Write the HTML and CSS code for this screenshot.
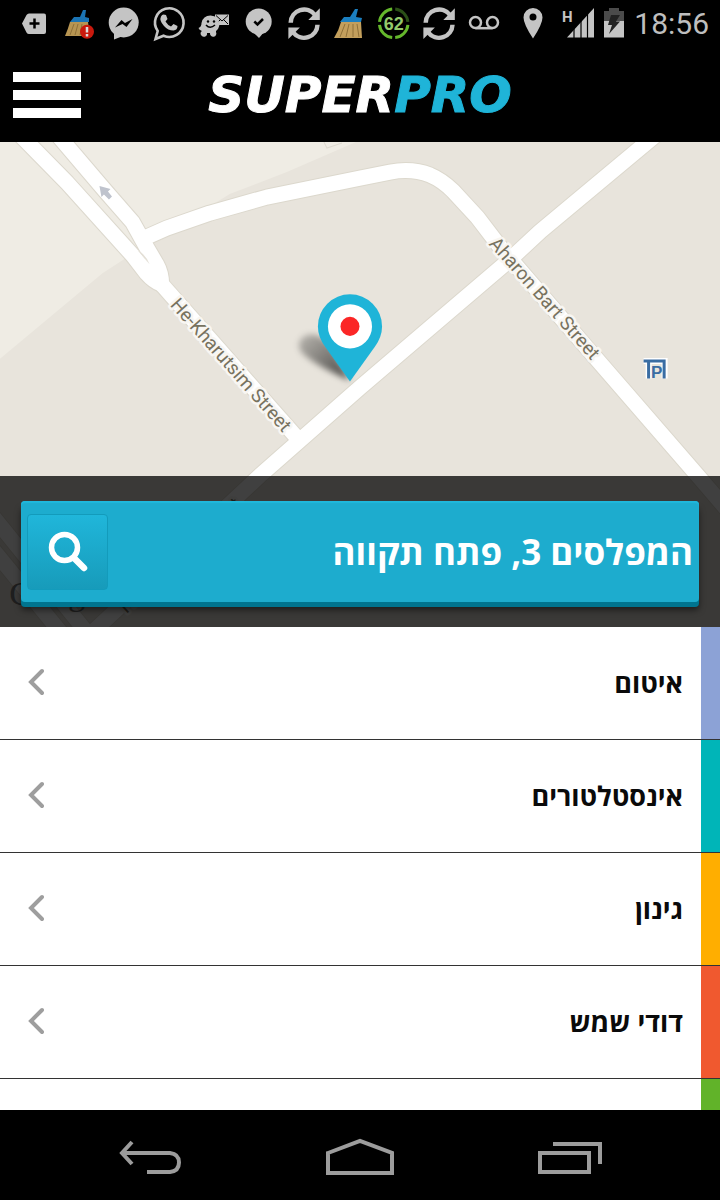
FILE: index.html
```html
<!DOCTYPE html>
<html lang="he" dir="rtl">
<head>
	<meta charset="UTF-8">
	<meta name="viewport" content="width=device-width, initial-scale=1">
	<title>SuperPro</title>
	<link rel="stylesheet" href="styles.css">
</head>
<body>
	<div class="status" dir="ltr">
		<svg class="note" viewBox="0 0 45 48"><path d="M11 23.5L15.500 15Q16.500 13.500 18 13.500H33Q35 13.500 35 15.500V32Q35 34 33 34H18Q16.500 34 15.500 32.500Z"/><path class="cut" d="M18.500 23.500H28.500M23.500 18.500V28.500"/></svg>
		<svg class="note" viewBox="0 0 45 48"><path fill="#b79552" d="M14 22H32L34 36H9Q12 29 14 22Z"/><path class="hair" d="M18 24L14 35M22 24L19 35M26 24L24 35"/><path fill="#1b74b4" d="M14 22L18 17H24L27 10H30L29 17L33 18V22Z"/><circle cx="31" cy="31.700" r="7" fill="#c9190d"/><path stroke="#ddd" stroke-width="2.500" d="M31 27V32.500M31 34V36.500"/></svg>
		<svg class="note" viewBox="0 0 45 48"><circle cx="22.700" cy="22.500" r="15"/><path d="M13 31V39.500L22 36Z"/><path fill="#000" d="M14 27.500L20.500 20L24 23L31.500 19L25.500 27L21.500 24Z"/></svg>
		<svg class="note" viewBox="0 0 45 48"><path fill="none" stroke="#c4c4c4" stroke-width="2.600" d="M9.500 39L11.700 31A14.300 14.300 0 1 1 17.500 35.700Z"/><path d="M17.500 14.500L20 15L21.500 19L19.500 21.500Q21.500 25 25 26.500L27.500 24L31.500 26Q31.500 30 27.500 30.500Q22 30.500 18 26Q13 20.500 15 16.500Q16 14.500 17.500 14.500Z"/></svg>
		<svg class="note" viewBox="0 0 45 48"><path d="M24 14.500H38V25H24Z"/><path fill="none" stroke="#000" d="M25 15.500L31 21L37 15.500M25 24L29.500 19.500M37 24L32.500 19.500"/><path d="M7.500 28Q10.500 27 10.500 23Q12 15.500 19.500 15.500Q28 16 28.500 24Q28 29 25 31V32A3.200 3.200 0 1 1 19 33H16A3.200 3.200 0 1 1 11 31Q8 30 7.500 28Z"/><circle cx="17" cy="21.500" r="1.200" fill="#000"/><circle cx="23" cy="21.500" r="1.200" fill="#000"/><path fill="none" stroke="#000" stroke-width="1.500" d="M15 25Q19 29.500 24 25"/></svg>
		<svg class="note" viewBox="0 0 45 48"><circle cx="22.700" cy="21.500" r="13"/><path d="M17 32L23 38L28 32Z"/><path class="cut" d="M18.300 21.500L21.500 24.500L27 19"/></svg>
		<svg class="note" viewBox="0 0 45 48"><g id="half"><path fill="none" stroke="#c4c4c4" stroke-width="4.500" d="M9.700 22.700A13.500 13.500 0 0 1 34 15"/><path d="M38.800 8.300V20H27.300Z"/></g><use href="#half" transform="rotate(180 23.100 23.700)"/></svg>
		<svg class="note" viewBox="0 0 45 48"><path fill="#c39f5c" d="M15 22H35L36 38H8Q13 30 15 22Z"/><path class="hair" d="M19 24L14 37M23 24L20 37M27 24V37M31 24L33 37"/><path fill="#1b7fc0" d="M14 22L18 17H24L29 9H32L30 17L36 18L35 22Z"/></svg>
		<svg class="note" viewBox="0 0 45 48"><g fill="none" stroke="#65b72c" stroke-width="3"><path d="M21.200 37.600A14.300 14.300 0 0 1 8.500 24.800M8.500 21.800A14.300 14.300 0 0 1 21.200 9.100M36.900 24.800A14.300 14.300 0 0 1 24.200 37.600"/><path stroke="#2b5017" d="M24.200 9.100A14.300 14.300 0 0 1 36.900 21.800"/></g><text class="percent" x="22.700" y="29.500">62</text></svg>
		<svg class="note" viewBox="0 0 45 48"><use href="#half"/><use href="#half" transform="rotate(180 23.100 23.700)"/></svg>
		<svg class="note" viewBox="0 0 45 48"><g fill="none" stroke="#c4c4c4" stroke-width="2.500"><circle cx="14.500" cy="22.500" r="5.500"/><circle cx="31.500" cy="22.500" r="5.500"/><path d="M14.500 28.200H31.500"/></g></svg>
		<div class="system">
			<svg width="20" height="48" viewBox="0 0 20 48"><path fill-rule="evenodd" d="M10 38.500Q.5 24 .5 17.500A9.500 9.500 0 0 1 19.500 17.500Q19.500 24 10 38.500ZM10 13.500A3.500 3.500 0 1 0 10 20.500A3.500 3.500 0 1 0 10 13.500Z"/></svg>
			<svg class="signal" width="32" height="48" viewBox="0 0 32 48"><text x="0" y="22">H</text><path d="M5 37.500L32 8V37.500Z"/><path stroke="#000" stroke-width="1.200" d="M12 8V38M19 8V38M25.500 8V38"/></svg>
			<svg width="20" height="48" viewBox="0 0 20 48"><path fill="#4b4b4b" d="M0 21V11H5V8H15V11H20V21Z"/><path d="M0 21H20V37.500H0Z"/><path fill="#222" d="M7 15H16L12 21.500H16L5 34L8 25H4Z"/></svg>
			<time>18:56</time>
		</div>
	</div>

	<header class="top" dir="ltr">
		<button class="menu" type="button" aria-label="תפריט"><span></span><span></span><span></span></button>
		<h1 class="logo">SUPER<span>PRO</span></h1>
	</header>

	<section class="map">
		<svg class="mapPic" viewBox="0 0 720 484" preserveAspectRatio="xMidYMin slice" direction="ltr">
			<defs>
				<filter id="blur" x="-30%" y="-30%" width="160%" height="160%"><feGaussianBlur stdDeviation="3"/></filter>
				<linearGradient id="shade" x1="0" y1="0" x2="1" y2="1"><stop offset="0" stop-color="#000" stop-opacity=".2"/><stop offset="1" stop-color="#000" stop-opacity=".7"/></linearGradient>
				<!-- roads are drawn twice: wide edge first, white on top -->
				<g id="roads">
					<path d="M18 -10L68 41L133 113L147 131Q154 139 162 142"/>
					<path d="M54 -12L106 49L133 80L147 105L157 122Q162 131 162 142"/>
					<path d="M155 134L297 295"/>
					<path d="M140 98L167 86L210 71L267 55L360 36L390 30Q412 26 430 33Q442 38 453 49L477 75L500 105L593 213L697 333L740 383"/>
					<path d="M660 -11L540 89L510 117L360 245L260 333L90 492"/>
					<path d="M-10 369L100 505M-10 402L70 500"/>
				</g>
			</defs>
			<path fill="#e8e4dc" d="M0 0H720V484H0Z"/>
			<path fill="#efece4" d="M0 0H356L287 30L230 52L123 118L103 131L0 217Z"/>
			<path fill="none" stroke="#dedad0" d="M324 0L327 6L342 1"/>
			<use href="#roads" class="edge"/>
			<use href="#roads" class="road"/>
			<path fill="#e3dfd6" d="M138 108Q146 112 150 122Z"/>
			<path fill="#bfc3cd" d="M100 44L111 47L108.500 49.500L112.500 54.500L109.500 57.500L104.500 52.500L102 55Z"/>
			<g class="street">
				<text transform="translate(170 163) rotate(48.500)">He-Kharutsim Street</text>
				<text transform="translate(488 102) rotate(48.500)">Aharon Bart Street</text>
				<text transform="translate(127 471) rotate(-43)">HaMefalsim Street</text>
			</g>
			<text class="mark" x="10" y="462">Google</text>
			<g class="train"><path stroke="#fff" stroke-width="6" d="M643 218.500H664V236M648 218V236"/><path d="M643 218.500H665M663.500 218V236M648 218V236"/><text x="650.500" y="236">P</text></g>
			<path fill="url(#shade)" filter="url(#blur)" d="M350 238Q313 222 301 209Q296 199 304 194Q318 187 332 205Z"/>
			<path fill="#1fb4d8" d="M350 239L325 204Q318 194 318 184A32 32 0 0 1 382 184Q382 194 375 204Z"/>
			<circle cx="350" cy="184" r="22" fill="#fff"/>
			<circle cx="350" cy="184" r="9.500" fill="#fb2626"/>
		</svg>
		<div class="panel">
			<form class="search">
				<input type="text" aria-label="כתובת" value="המפלסים 3, פתח תקווה">
				<button type="button" aria-label="חיפוש">
					<svg width="40" height="42" viewBox="0 0 40 42"><circle cx="16.500" cy="16.500" r="13" fill="none" stroke="#fff" stroke-width="5.500"/><path stroke="#fff" stroke-width="6.500" stroke-linecap="round" d="M26 27L36 37"/></svg>
				</button>
			</form>
		</div>
	</section>

	<ul class="list">
		<li class="blue"><a href="#">איטום<svg width="16" height="28" viewBox="0 0 16 28"><path d="M14 3L3 14L14 25"/></svg></a></li>
		<li class="teal"><a href="#">אינסטלטורים<svg width="16" height="28" viewBox="0 0 16 28"><path d="M14 3L3 14L14 25"/></svg></a></li>
		<li class="yellow"><a href="#">גינון<svg width="16" height="28" viewBox="0 0 16 28"><path d="M14 3L3 14L14 25"/></svg></a></li>
		<li class="red"><a href="#">דודי שמש<svg width="16" height="28" viewBox="0 0 16 28"><path d="M14 3L3 14L14 25"/></svg></a></li>
		<li class="green"><a href="#" aria-label="עוד"></a></li>
	</ul>

	<nav class="keys" dir="ltr">
		<button type="button" aria-label="חזרה"><svg width="64" height="36" viewBox="0 0 64 36"><path d="M3 14H52Q61 15 61 23.500Q61 32 52 33H29M14 3L4 14L14 25"/></svg></button>
		<button type="button" aria-label="בית"><svg width="68" height="38" viewBox="0 0 68 38"><path d="M2 15L34 3L66 15V35H2Z"/></svg></button>
		<button type="button" aria-label="אחרונים"><svg width="64" height="36" viewBox="0 0 64 36"><path d="M2 14H51V33H2ZM15 5H62V25"/></svg></button>
	</nav>
</body>
</html>
```
FILE: styles.css
```css
*{margin: 0;padding: 0;box-sizing: border-box;}
body{
	display: flex;
	flex-direction: column;
	height: 100vh;
	overflow: hidden;
	background: #fff;
	font-family: "Open Sans", "Noto Sans", sans-serif;
}
button{
	border: 0;
	background: none;
	cursor: pointer;
}
svg{display: block;}

/* status bar */
.status{
	display: flex;
	flex: none;
	height: 48px;
	padding: 0 11px;
	background: #000;
	fill: #c4c4c4;
}
.note{
	width: 45px;
	height: 48px;
}
.cut{
	fill: none;
	stroke: #000;
	stroke-width: 2.5;
}
.hair{
	fill: none;
	stroke: #8f7038;
}
.percent{
	fill: #93c96b;
	font: bold 18px "Liberation Sans", sans-serif;
	text-anchor: middle;
}
.system{
	display: flex;
	align-items: center;
	margin-left: auto;
}
.system svg{margin-right: 10px;}
.system .signal{
	margin-left: 9px;
}
.signal text{font: bold 15px Roboto, sans-serif;}
.system time{
	color: #bebebe;
	font: 30px/48px Roboto, sans-serif;
}

/* header */
.top{
	display: grid;
	grid-template-columns: 68px 1fr 68px;
	align-items: center;
	flex: none;
	height: 94px;
	padding: 0 13px;
	background: #000;
}
.menu{
	display: flex;
	flex-direction: column;
	gap: 8px;
}
.menu span{
	width: 68px;
	height: 10px;
	background: #fff;
}
.logo{
	color: #fff;
	font: italic bold 50px/60px "DejaVu Sans", sans-serif;
	text-align: center;
	-webkit-text-stroke: 1px;
}
.logo span{color: #1fb4d8;}

/* map */
.map{
	position: relative;
	flex: none;
	padding-top: 334px;
	overflow: hidden;
}
.mapPic{
	position: absolute;
	top: 0;
	left: 0;
	width: 100%;
	height: 100%;
}
.edge, .road{
	fill: none;
	stroke: #dcd8cd;
	stroke-width: 17;
	stroke-linejoin: round;
}
.road{
	stroke: #fff;
	stroke-width: 15;
}
.street{
	fill: #77725f;
	stroke: #f8f6f2;
	stroke-width: 5;
	stroke-linejoin: round;
	paint-order: stroke;
	font: 19px Roboto, sans-serif;
}
.mark{
	fill: #777;
	font: 34px "Liberation Serif", serif;
}
.train{
	fill: none;
	stroke: #3a6da3;
	stroke-width: 3;
}
.train text{
	fill: #3a6da3;
	stroke: none;
	font: bold 17px "Liberation Sans", sans-serif;
}
.panel{
	position: relative;
	padding: 25px 21px;
	background: rgba(0,0,0,.75);
}
.search{
	display: flex;
	align-items: center;
	height: 101px;
	padding: 0 6px;
	border-radius: 4px;
	background: #1dacce;
	box-shadow: inset 0 2px 1px #20b8dc, 0 5px 0 #00748f, 0 8px 6px rgba(0,0,0,.5);
}
.search input{
	flex: 1;
	min-width: 0;
	height: 76px;
	border: 0;
	outline: 0;
	background: none;
	color: #fff;
	font: bold 35px "Open Sans", "Noto Sans", sans-serif;
}
.search button{
	display: flex;
	align-items: center;
	justify-content: center;
	width: 81px;
	height: 76px;
	border: 1px solid #139bbb;
	border-radius: 4px;
	background: linear-gradient(#20b6da, #179bba);
}

/* categories */
.list{
	flex: 1;
	min-height: 0;
	overflow: hidden;
	list-style: none;
}
.list li{
	height: 113px;
	padding-right: 19px;
	border-bottom: 1px solid #333;
}
.list a{
	display: flex;
	align-items: center;
	justify-content: space-between;
	height: 100%;
	padding: 0 18px 2px 28px;
	background: #fff;
	color: #0a0a0a;
	font-size: 27px;
	font-weight: bold;
	text-decoration: none;
}
.list svg{
	fill: none;
	stroke: #9e9e9e;
	stroke-width: 4;
	stroke-linecap: round;
}
.list .blue{background: #8ca2d6;}
.list .teal{background: #00b5b8;}
.list .yellow{background: #ffae00;}
.list .red{background: #f0592f;}
.list .green{background: #61b329;}

/* android keys */
.keys{
	display: flex;
	flex: none;
	height: 90px;
	padding: 0 45px;
	background: #000;
}
.keys button{
	display: flex;
	flex: 1;
	align-items: center;
	justify-content: center;
	padding-top: 4px;
}
.keys svg{
	fill: none;
	stroke: #9c9c9c;
	stroke-width: 4;
}
```
